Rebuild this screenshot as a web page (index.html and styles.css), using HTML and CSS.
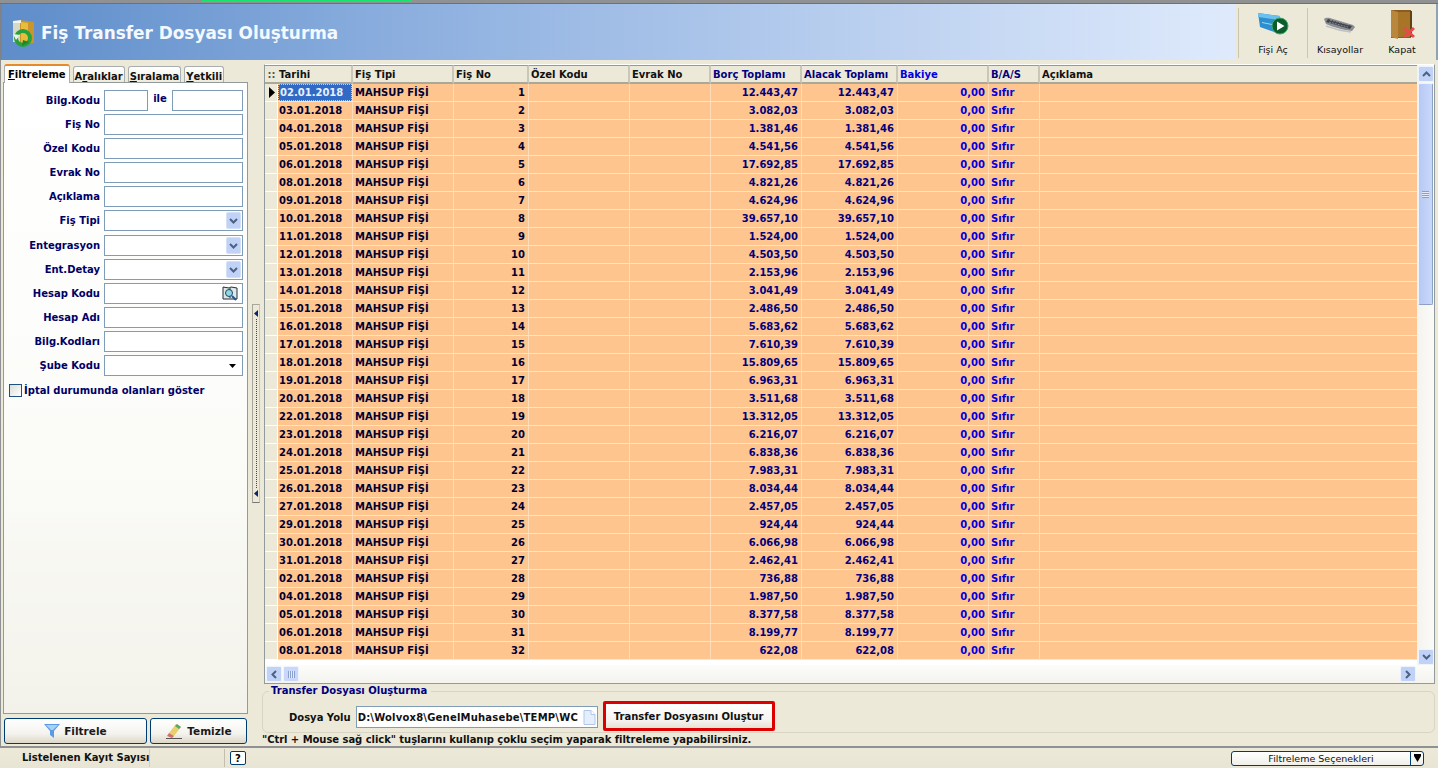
FILE: index.html
```html
<!DOCTYPE html>
<html lang="tr">
<head>
<meta charset="utf-8">
<title>Fiş Transfer Dosyası Oluşturma</title>
<link rel="stylesheet" href="styles.css">
</head>
<body>
<div class="topstrip"><span class="topgreen"></span></div>
<header class="header">
  <div class="titlebar">
    <svg class="logo" width="26" height="30" viewBox="0 0 26 30"><path d="M3 3h8v21H3z" fill="#d8d8c8"/><path d="M10 2l14 2v21l-14 1z" fill="#c8962a"/><path d="M11 4l7 1v18l-7 2z" fill="#e8bc3c"/><path d="M3 3l8-1v3H3z" fill="#f4f4e8"/><circle cx="13" cy="20" r="7" fill="none" stroke="#2aa03c" stroke-width="4"/><path d="M3 16l7 1-4 5z" fill="#e8f4e8"/><path d="M19 24l-7 4 1-6z" fill="#188a2c"/></svg>
    <h1 class="title">Fiş Transfer Dosyası Oluşturma</h1>
  </div>
  <div class="toolbar">
    <button class="tool tool-open">
      <svg width="32" height="26" viewBox="0 0 32 26"><path d="M1 1l22 3v18L3 15z" fill="#2c8fd0"/><path d="M1 1l22 3v4L1 5z" fill="#6cc0ee"/><path d="M5 10l10 2v1L5 11z" fill="#a0d8f4"/><circle cx="23" cy="14" r="8" fill="#0c5c2c" stroke="#3ca86c"/><path d="M20 9.500l7.500 4.500-7.500 4.500z" fill="#fff"/></svg>
      <span>Fişi Aç</span>
    </button>
    <button class="tool tool-keys">
      <svg width="34" height="22" viewBox="0 0 34 22"><path d="M1 4c3-2 5-1 9 0l20 6 2 2-3 4c-8-1-20-4-26-7z" fill="#8a8e94"/><path d="M5 4l24 7-2 3L3 7z" fill="#3e4146"/><path d="M7 5l19 5M6 7l19 5" stroke="#9a9ea4" stroke-width=".8" stroke-dasharray="2 1"/><path d="M3 11c8 3 16 5 25 6" stroke="#c0c2c6" stroke-width="1.500" fill="none"/></svg>
      <span>Kısayollar</span>
    </button>
    <button class="tool tool-close">
      <svg width="28" height="31" viewBox="0 0 28 31"><path d="M3 1h20v28H3z" fill="#8a5c22"/><path d="M3 1l7 2v27l-7-2z" fill="#b8863c"/><path d="M10 3h12v25H10z" fill="#a87428"/><path d="M22 2h2v26h-2z" fill="#604014"/><path d="M16 19l10 9m0-9l-10 9" stroke="#e8484c" stroke-width="3"/></svg>
      <span>Kapat</span>
    </button>
  </div>
</header>

<main class="main">
  <aside class="left">
    <nav class="tabs">
      <span class="tab active"><u>F</u>iltreleme</span>
      <span class="tab">A<u>r</u>alıklar</span>
      <span class="tab"><u>S</u>ıralama</span>
      <span class="tab"><u>Y</u>etkili</span>
    </nav>
    <section class="filter">
      <div class="form">
        <label>Bilg.Kodu</label>
        <div class="split"><span class="field short"></span><b class="ile">ile</b><span class="field grow"></span></div>
        <label>Fiş No</label><span class="field"></span>
        <label>Özel Kodu</label><span class="field"></span>
        <label>Evrak No</label><span class="field"></span>
        <label>Açıklama</label><span class="field"></span>
        <label>Fiş Tipi</label><span class="field combo"><i class="drop"><svg width="9" height="6" viewBox="0 0 9 6"><path d="M1 1l3.500 3.500L8 1" fill="none" stroke="#4d6185" stroke-width="2"/></svg></i></span>
        <label>Entegrasyon</label><span class="field combo"><i class="drop"><svg width="9" height="6" viewBox="0 0 9 6"><path d="M1 1l3.500 3.500L8 1" fill="none" stroke="#4d6185" stroke-width="2"/></svg></i></span>
        <label>Ent.Detay</label><span class="field combo"><i class="drop"><svg width="9" height="6" viewBox="0 0 9 6"><path d="M1 1l3.500 3.500L8 1" fill="none" stroke="#4d6185" stroke-width="2"/></svg></i></span>
        <label>Hesap Kodu</label><span class="field combo"><svg class="lookup" width="16" height="15" viewBox="0 0 16 15"><path d="M1 1l6 1 2-1 6 1v11H1z" fill="#dfe8e8" stroke="#20303c"/><path d="M8 2v10" stroke="#20303c"/><circle cx="7" cy="7" r="3.500" fill="#8fd8e8" stroke="#204858"/><path d="M10 10l4 4" stroke="#2050a0" stroke-width="2"/></svg></span>
        <label>Hesap Adı</label><span class="field"></span>
        <label>Bilg.Kodları</label><span class="field"></span>
        <label>Şube Kodu</label><span class="field combo"><svg class="caret" width="7" height="4" viewBox="0 0 7 4"><path d="M0 0h7L3.500 4z" fill="#000"/></svg></span>
      </div>
      <div class="check"><span class="box"></span><span>İptal durumunda olanları göster</span></div>
    </section>
    <div class="actions">
      <button class="btn">
        <svg width="16" height="14" viewBox="0 0 16 14"><path d="M0 0h16l-6 7v7l-4-3V7z" fill="#5b9be6"/><path d="M2 1h12l-5 5H7z" fill="#a8d0f6"/></svg>
        Filtrele
      </button>
      <button class="btn">
        <svg width="18" height="16" viewBox="0 0 18 16"><path d="M11 1l5 3-7 9-5-3z" fill="#e8d070"/><path d="M4 10l5 3-2 2-5-2z" fill="#d07068"/><path d="M12 1l4 3-2 2-4-3z" fill="#58a868"/><path d="M1 15.500h16" stroke="#555"/></svg>
        Temizle
      </button>
    </div>
  </aside>

  <div class="splitter">
    <div class="grip"><svg width="5" height="7" viewBox="0 0 5 7"><path d="M4 0v7L0 3.500z" fill="#0a246a"/></svg><i class="dots"></i><svg width="5" height="7" viewBox="0 0 5 7"><path d="M4 0v7L0 3.500z" fill="#0a246a"/></svg></div>
  </div>

  <div class="right">
    <div class="gridframe">
      <div class="gridtop">
        <div class="gridbody">
          <table class="data">
            <colgroup><col class="c0"><col class="c1"><col class="c2"><col class="c3"><col class="c4"><col class="c5"><col class="c6"><col class="c7"><col class="c8"><col class="c9"><col></colgroup>
            <thead><tr><th class="corner">::</th><th>Tarihi</th><th>Fiş Tipi</th><th>Fiş No</th><th>Özel Kodu</th><th>Evrak No</th><th class="navy">Borç Toplamı</th><th class="navy">Alacak Toplamı</th><th class="blue">Bakiye</th><th class="navy">B/A/S</th><th>Açıklama</th></tr></thead>
            <tbody>
              <tr><th class="ind"><svg width="6" height="11" viewBox="0 0 6 11"><path d="M0 0l6 5.500L0 11z" fill="#000"/></svg></th><td class="sel"><span>02.01.2018</span></td><td>MAHSUP FİŞİ</td><td>1</td><td></td><td></td><td>12.443,47</td><td>12.443,47</td><td>0,00</td><td>Sıfır</td><td></td></tr>
              <tr><th></th><td>03.01.2018</td><td>MAHSUP FİŞİ</td><td>2</td><td></td><td></td><td>3.082,03</td><td>3.082,03</td><td>0,00</td><td>Sıfır</td><td></td></tr>
              <tr><th></th><td>04.01.2018</td><td>MAHSUP FİŞİ</td><td>3</td><td></td><td></td><td>1.381,46</td><td>1.381,46</td><td>0,00</td><td>Sıfır</td><td></td></tr>
              <tr><th></th><td>05.01.2018</td><td>MAHSUP FİŞİ</td><td>4</td><td></td><td></td><td>4.541,56</td><td>4.541,56</td><td>0,00</td><td>Sıfır</td><td></td></tr>
              <tr><th></th><td>06.01.2018</td><td>MAHSUP FİŞİ</td><td>5</td><td></td><td></td><td>17.692,85</td><td>17.692,85</td><td>0,00</td><td>Sıfır</td><td></td></tr>
              <tr><th></th><td>08.01.2018</td><td>MAHSUP FİŞİ</td><td>6</td><td></td><td></td><td>4.821,26</td><td>4.821,26</td><td>0,00</td><td>Sıfır</td><td></td></tr>
              <tr><th></th><td>09.01.2018</td><td>MAHSUP FİŞİ</td><td>7</td><td></td><td></td><td>4.624,96</td><td>4.624,96</td><td>0,00</td><td>Sıfır</td><td></td></tr>
              <tr><th></th><td>10.01.2018</td><td>MAHSUP FİŞİ</td><td>8</td><td></td><td></td><td>39.657,10</td><td>39.657,10</td><td>0,00</td><td>Sıfır</td><td></td></tr>
              <tr><th></th><td>11.01.2018</td><td>MAHSUP FİŞİ</td><td>9</td><td></td><td></td><td>1.524,00</td><td>1.524,00</td><td>0,00</td><td>Sıfır</td><td></td></tr>
              <tr><th></th><td>12.01.2018</td><td>MAHSUP FİŞİ</td><td>10</td><td></td><td></td><td>4.503,50</td><td>4.503,50</td><td>0,00</td><td>Sıfır</td><td></td></tr>
              <tr><th></th><td>13.01.2018</td><td>MAHSUP FİŞİ</td><td>11</td><td></td><td></td><td>2.153,96</td><td>2.153,96</td><td>0,00</td><td>Sıfır</td><td></td></tr>
              <tr><th></th><td>14.01.2018</td><td>MAHSUP FİŞİ</td><td>12</td><td></td><td></td><td>3.041,49</td><td>3.041,49</td><td>0,00</td><td>Sıfır</td><td></td></tr>
              <tr><th></th><td>15.01.2018</td><td>MAHSUP FİŞİ</td><td>13</td><td></td><td></td><td>2.486,50</td><td>2.486,50</td><td>0,00</td><td>Sıfır</td><td></td></tr>
              <tr><th></th><td>16.01.2018</td><td>MAHSUP FİŞİ</td><td>14</td><td></td><td></td><td>5.683,62</td><td>5.683,62</td><td>0,00</td><td>Sıfır</td><td></td></tr>
              <tr><th></th><td>17.01.2018</td><td>MAHSUP FİŞİ</td><td>15</td><td></td><td></td><td>7.610,39</td><td>7.610,39</td><td>0,00</td><td>Sıfır</td><td></td></tr>
              <tr><th></th><td>18.01.2018</td><td>MAHSUP FİŞİ</td><td>16</td><td></td><td></td><td>15.809,65</td><td>15.809,65</td><td>0,00</td><td>Sıfır</td><td></td></tr>
              <tr><th></th><td>19.01.2018</td><td>MAHSUP FİŞİ</td><td>17</td><td></td><td></td><td>6.963,31</td><td>6.963,31</td><td>0,00</td><td>Sıfır</td><td></td></tr>
              <tr><th></th><td>20.01.2018</td><td>MAHSUP FİŞİ</td><td>18</td><td></td><td></td><td>3.511,68</td><td>3.511,68</td><td>0,00</td><td>Sıfır</td><td></td></tr>
              <tr><th></th><td>22.01.2018</td><td>MAHSUP FİŞİ</td><td>19</td><td></td><td></td><td>13.312,05</td><td>13.312,05</td><td>0,00</td><td>Sıfır</td><td></td></tr>
              <tr><th></th><td>23.01.2018</td><td>MAHSUP FİŞİ</td><td>20</td><td></td><td></td><td>6.216,07</td><td>6.216,07</td><td>0,00</td><td>Sıfır</td><td></td></tr>
              <tr><th></th><td>24.01.2018</td><td>MAHSUP FİŞİ</td><td>21</td><td></td><td></td><td>6.838,36</td><td>6.838,36</td><td>0,00</td><td>Sıfır</td><td></td></tr>
              <tr><th></th><td>25.01.2018</td><td>MAHSUP FİŞİ</td><td>22</td><td></td><td></td><td>7.983,31</td><td>7.983,31</td><td>0,00</td><td>Sıfır</td><td></td></tr>
              <tr><th></th><td>26.01.2018</td><td>MAHSUP FİŞİ</td><td>23</td><td></td><td></td><td>8.034,44</td><td>8.034,44</td><td>0,00</td><td>Sıfır</td><td></td></tr>
              <tr><th></th><td>27.01.2018</td><td>MAHSUP FİŞİ</td><td>24</td><td></td><td></td><td>2.457,05</td><td>2.457,05</td><td>0,00</td><td>Sıfır</td><td></td></tr>
              <tr><th></th><td>29.01.2018</td><td>MAHSUP FİŞİ</td><td>25</td><td></td><td></td><td>924,44</td><td>924,44</td><td>0,00</td><td>Sıfır</td><td></td></tr>
              <tr><th></th><td>30.01.2018</td><td>MAHSUP FİŞİ</td><td>26</td><td></td><td></td><td>6.066,98</td><td>6.066,98</td><td>0,00</td><td>Sıfır</td><td></td></tr>
              <tr><th></th><td>31.01.2018</td><td>MAHSUP FİŞİ</td><td>27</td><td></td><td></td><td>2.462,41</td><td>2.462,41</td><td>0,00</td><td>Sıfır</td><td></td></tr>
              <tr><th></th><td>02.01.2018</td><td>MAHSUP FİŞİ</td><td>28</td><td></td><td></td><td>736,88</td><td>736,88</td><td>0,00</td><td>Sıfır</td><td></td></tr>
              <tr><th></th><td>04.01.2018</td><td>MAHSUP FİŞİ</td><td>29</td><td></td><td></td><td>1.987,50</td><td>1.987,50</td><td>0,00</td><td>Sıfır</td><td></td></tr>
              <tr><th></th><td>05.01.2018</td><td>MAHSUP FİŞİ</td><td>30</td><td></td><td></td><td>8.377,58</td><td>8.377,58</td><td>0,00</td><td>Sıfır</td><td></td></tr>
              <tr><th></th><td>06.01.2018</td><td>MAHSUP FİŞİ</td><td>31</td><td></td><td></td><td>8.199,77</td><td>8.199,77</td><td>0,00</td><td>Sıfır</td><td></td></tr>
              <tr><th></th><td>08.01.2018</td><td>MAHSUP FİŞİ</td><td>32</td><td></td><td></td><td>622,08</td><td>622,08</td><td>0,00</td><td>Sıfır</td><td></td></tr>
            </tbody>
          </table>
        </div>
        <div class="vscroll">
          <span class="sbtn"><svg width="9" height="6" viewBox="0 0 9 6"><path d="M1 5l3.500-3.500L8 5" fill="none" stroke="#4d6185" stroke-width="2"/></svg></span>
          <span class="vthumb"><i class="lines"></i></span>
          <span class="vtrack"></span>
          <span class="sbtn"><svg width="9" height="6" viewBox="0 0 9 6"><path d="M1 1l3.500 3.500L8 1" fill="none" stroke="#4d6185" stroke-width="2"/></svg></span>
        </div>
      </div>
      <div class="hscroll">
        <span class="sbtn"><svg width="6" height="9" viewBox="0 0 6 9"><path d="M5 1L1.500 4.500 5 8" fill="none" stroke="#4d6185" stroke-width="2"/></svg></span>
        <span class="hthumb"><i class="vlines"></i></span>
        <span class="htrack"></span>
        <span class="sbtn"><svg width="6" height="9" viewBox="0 0 6 9"><path d="M1 1l3.500 3.500L1 8" fill="none" stroke="#4d6185" stroke-width="2"/></svg></span>
      </div>
    </div>
    <fieldset class="group">
      <legend>Transfer Dosyası Oluşturma</legend>
      <label class="pathlabel">Dosya Yolu</label>
      <span class="path"><span class="pathtext">D:\Wolvox8\GenelMuhasebe\TEMP\WC</span><svg width="13" height="15" viewBox="0 0 13 15"><path d="M1 .5h7l4 4v10H1z" fill="#e4eefc" stroke="#b0c8e8"/><path d="M8 .5v4h4" fill="#fff" stroke="#b0c8e8"/></svg></span>
      <button class="make">Transfer Dosyasını Oluştur</button>
    </fieldset>
    <p class="note">"Ctrl + Mouse sağ click" tuşlarını kullanıp çoklu seçim yaparak filtreleme yapabilirsiniz.</p>
  </div>
</main>

<footer class="status">
  <span class="cell-count">Listelenen Kayıt Sayısı</span>
  <span class="cell-value"></span>
  <span class="help">?</span>
  <span class="status-fill"></span>
  <span class="options"><span class="options-label">Filtreleme Seçenekleri</span><i class="options-drop"><svg width="7" height="8" viewBox="0 0 7 8"><path d="M0 0h7v2L3.500 8 0 2z" fill="#000"/></svg></i></span>
</footer>
</body>
</html>
```

FILE: styles.css
```css
* { box-sizing: border-box; }
html, body { margin: 0; height: 768px; overflow: hidden; }
body {
  display: flex;
  flex-direction: column;
  width: 1438px;
  background: #ece9d8;
  font: bold 10px "DejaVu Sans", sans-serif;
  color: #000;
}
button { font: inherit; color: inherit; margin: 0; }

.topstrip { height: 4px; background: #8f9193; flex: none; display: flex; padding-left: 202px; border-bottom: 1px solid #6f7072; }
.topgreen { width: 210px; height: 2px; background: #19e36f; }

.header { height: 56px; flex: none; display: flex; border-left: 2px solid #7f8388; border-right: 2px solid #8ea4b4; background: #ece9d8; }
.titlebar { flex: 1; display: flex; align-items: center; gap: 5px; padding: 2px 0 0 8px; background: linear-gradient(90deg, #5e8dca 0%, #8fb1e0 35%, #dfeafc 100%); }
.logo { flex: none; }
.title { margin: 0; color: #f4f8ff; font: bold 16.900px "DejaVu Sans", sans-serif; }
.toolbar { width: 201px; display: flex; padding: 4px 0 0 3px; align-items: stretch; }
.tool { border: 0; background: none; padding: 0; display: flex; flex-direction: column; align-items: center; justify-content: space-between; height: 50px; font: 9.500px "DejaVu Sans", sans-serif; color: #111; }
.tool span { padding-bottom: 3px; }
.tool-open { width: 70px; padding-top: 4px; border-left: 1px solid #c9c6b2; border-right: 1px solid #c9c6b2; }
.tool-keys { width: 64px; padding-top: 7px; }
.tool-close { width: 60px; padding-top: 1px; }

.main { flex: 1; display: flex; min-height: 0; }

.left { width: 250px; flex: none; padding: 4px 2px 2px 2px; display: flex; flex-direction: column; border-left: 1px solid #8f9193; }
.tabs { display: flex; height: 18px; gap: 3px; padding-left: 1px; flex: none; }
.tab { display: flex; align-items: center; padding: 2px 1px 0; height: 17px; margin-top: 2px; background: linear-gradient(#fff, #ece9d8); border: 1px solid #a8aeb0; border-bottom: 0; border-radius: 3px 3px 0 0; font-size: 10px; color: #111; }
.tab.active { height: 19px; margin-top: 0; padding: 0 3px; background: #fff; border-top: 2px solid #e68b2c; color: #000; position: relative; z-index: 1; margin-bottom: -1px; }
.tab u { text-decoration: underline; }
.filter { height: 632px; flex: none; border: 1px solid #919b9c; background: linear-gradient(#fff, #fbfbf8 60%, #f3f2ea); padding: 7px 4px 0 0; }
.form { display: grid; grid-template-columns: 96px 139px; grid-template-rows: repeat(6, 21px) 22px repeat(5, 21px); row-gap: 3px; column-gap: 4px; align-items: end; }
.form label { text-align: right; color: #000066; line-height: 20px; }
.split { display: flex; align-items: center; height: 21px; }
.field { display: flex; height: 21px; align-items: center; justify-content: flex-end; background: #fff; border: 1px solid #7f9db9; }
.short { width: 44px; flex: none; }
.grow { flex: 1; }
.ile { width: 24px; color: #000066; text-align: center; flex: none; padding-bottom: 4px; }
.combo { padding-right: 1px; }
.drop { width: 15px; height: 17px; display: flex; align-items: center; justify-content: center; background: #c1d2f7; border: 1px solid #d4e0f8; border-radius: 2px; }
.lookup { margin-right: 3px; }
.caret { margin-right: 5px; }
.check { display: flex; align-items: center; gap: 2px; margin: 8px 0 0 5px; color: #000066; }
.box { width: 13px; height: 13px; border: 1px solid #1c5180; background: linear-gradient(135deg, #dcdcd7, #fff); }
.actions { display: flex; gap: 3px; margin-top: 4px; padding: 0 1px; height: 26px; flex: none; }
.btn { display: flex; align-items: center; justify-content: center; gap: 4px; height: 26px; border: 1px solid #003c74; border-radius: 3px; background: linear-gradient(#fff, #f4f3ee 60%, #dcd8c8); font-size: 10.500px; color: #1a1a1a; padding: 0; }
.btn:first-child { width: 144px; }
.btn:last-child { width: 98px; }

.splitter { width: 14px; flex: none; padding: 244px 0 0 2px; }
.grip { width: 8px; height: 199px; border: 1px solid #a8a69a; border-bottom-color: #777; display: flex; flex-direction: column; align-items: center; padding: 5px 0; border-right: 1px solid #c8c5b2; background: #ece9d8; }
.dots { flex: 1; width: 1px; border-left: 1px dotted #444; margin: 2px 0; }

.right { flex: 1; min-width: 0; display: flex; flex-direction: column; padding-right: 3px; }
.gridframe { height: 620px; flex: none; margin-top: 4px; background: #fff; border: 1px solid #919b9c; border-top: 1px solid #fff; display: flex; flex-direction: column; }
.gridtop { height: 600px; flex: none; display: flex; }
.gridbody { flex: 1; min-width: 0; overflow: hidden; background: #fff; }
.data { table-layout: fixed; width: 100%; border-collapse: separate; border-spacing: 0; }
.c0 { width: 13px; } .c1 { width: 75px; } .c2 { width: 101px; } .c3 { width: 75px; } .c4 { width: 101px; }
.c5 { width: 81px; } .c6 { width: 91px; } .c7 { width: 96px; } .c8 { width: 91px; } .c9 { width: 51px; }
thead th { height: 19px; padding: 1px 2px 0; background: #ece9d8; border-right: 2px solid #c9c7b8; border-bottom: 2px solid #aca899; border-top: 1px solid #919b9c; text-align: left; font-weight: bold; color: #111; white-space: nowrap; overflow: hidden; }
thead th:nth-child(2) { padding-left: 1px; }
thead th:last-child { border-right: 0; }
th.navy { color: #000080; }
th.blue { color: #0000e0; }
th.corner { padding: 0; text-align: center; color: #555; border-right: 0; }
tbody th { height: 18px; padding: 0; background: #ece9d8; border-bottom: 1px solid #fff; border-right: 1px solid #fff; text-align: center; }
tbody th.ind svg { display: block; margin: 0 0 0 4px; }
tbody td { height: 18px; padding: 0 2px; background: #ffc58f; border-right: 1px solid #ffdcb8; border-bottom: 1px solid #ffe5cc; white-space: nowrap; color: #000033; }
tbody td:nth-child(2) { padding-left: 1px; }
tbody td:last-child { border-right: 0; }
td:nth-child(4), td:nth-child(7), td:nth-child(8), td:nth-child(9) { text-align: right; padding-right: 3px; }
td:nth-child(7), td:nth-child(8) { color: #000080; }
td:nth-child(9), td:nth-child(10) { color: #0000e0; }
tbody td.sel { padding: 0; background: #316ac5; }
td.sel span { display: block; height: 17px; padding: 0 0 0 1px; line-height: 15px; border: 1px dotted #ffc58f; color: #e6f0ff; }

.vscroll { width: 17px; flex: none; display: flex; flex-direction: column; padding: 1px 1px 0; background: linear-gradient(90deg, #f4f3ee, #fbfbf8); }
.sbtn { width: 16px; height: 16px; flex: none; display: flex; align-items: center; justify-content: center; background: #c1d2f7; border: 1px solid #eef3fe; border-radius: 2px; }
.vthumb { height: 222px; flex: none; margin-top: 1px; display: flex; align-items: center; justify-content: center; background: linear-gradient(90deg, #b7c9f3, #c9d8fa); border: 1px solid #eef3fe; border-radius: 2px; border-right-color: #8ea0c4; border-bottom-color: #8ea0c4; }
.lines { width: 7px; height: 7px; background: repeating-linear-gradient(#8aa0cc 0 1px, #e4ecfc 1px 2px); }
.vtrack { flex: 1; }
.hscroll { height: 18px; flex: none; display: flex; align-items: center; padding: 0 18px 0 1px; background: linear-gradient(#fcfcfa, #f4f3ee); }
.hthumb { width: 16px; height: 16px; margin-left: 1px; display: flex; align-items: center; justify-content: center; background: #c9d8fa; border: 1px solid #eef3fe; border-radius: 2px; }
.vlines { width: 7px; height: 7px; background: repeating-linear-gradient(90deg, #8aa0cc 0 1px, #e4ecfc 1px 2px); }
.htrack { flex: 1; }

.group { height: 48px; flex: none; margin: 1px 0 0 -2px; padding: 4px 0 0 26px; border: 1px solid #d8d5c4; border-radius: 6px; display: flex; align-items: center; gap: 5px; min-width: 0; }
.group legend { color: #000080; padding: 0 4px 0 2px; margin-left: -20px; font-size: 10px; line-height: 12px; }
.pathlabel { color: #111; margin-top: 2px; }
.path { width: 242px; height: 22px; margin-top: 2px; display: flex; align-items: center; background: #fff; border: 1px solid #7f9db9; padding: 0 1px; justify-content: space-between; overflow: hidden; }
.pathtext { width: 224px; overflow: hidden; white-space: nowrap; letter-spacing: .2px; color: #111; }
.make { width: 172px; height: 30px; border: 3px solid #dd0000; border-radius: 2px; background: linear-gradient(#fff, #f4f3ee 70%, #e6e3d4); padding: 0; color: #111; white-space: nowrap; }
.note { margin: 0 0 0 -2px; height: 13px; line-height: 13px; white-space: nowrap; color: #111; letter-spacing: -.05px; }

.status { height: 22px; flex: none; display: flex; align-items: center; border-top: 2px solid #8f9193; background: linear-gradient(#ece9d8, #e8e5d4); }
.cell-count { width: 150px; padding-left: 22px; white-space: nowrap; color: #111; border-right: 1px solid #d2cfbe; height: 18px; line-height: 18px; }
.cell-value { width: 75px; height: 18px; border-right: 1px solid #c2bfae; }
.help { width: 16px; height: 14px; margin-left: 5px; display: flex; align-items: center; justify-content: center; border: 1px solid #003c74; border-radius: 2px; background: #fff; }
.status-fill { flex: 1; }
.options { width: 193px; height: 15px; margin-right: 14px; display: flex; align-items: center; border: 1px solid #003c74; border-radius: 3px; background: linear-gradient(#fff, #f0efe8); font: 9.500px "DejaVu Sans", sans-serif; color: #111; }
.options-label { flex: 1; text-align: center; white-space: nowrap; }
.options-drop { width: 13px; height: 13px; display: flex; align-items: center; justify-content: center; border-left: 1px solid #003c74; }
```
